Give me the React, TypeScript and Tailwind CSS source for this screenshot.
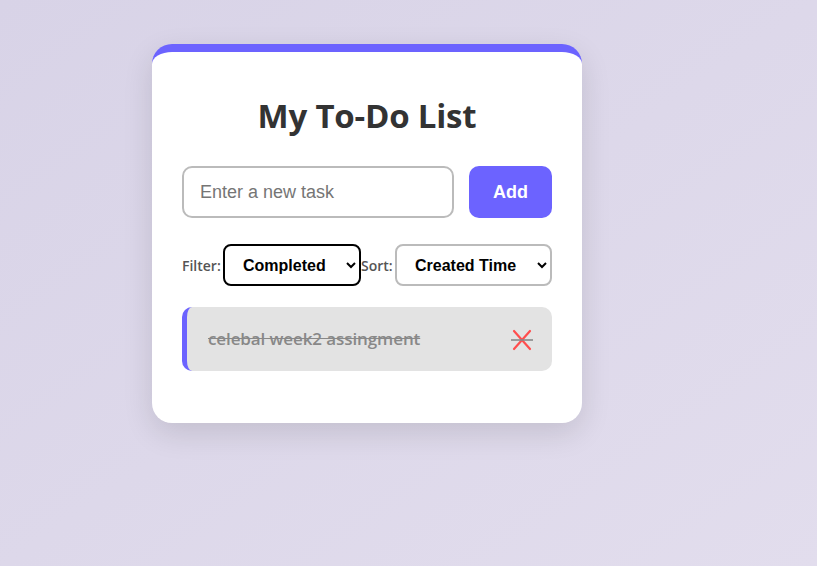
export default function App() {
  return (
    <div className="min-h-[566px] w-full bg-gradient-to-br from-[#d8d3e7] to-[#e2dded] pt-[44px] pl-[152px]">
      <div className="w-[430px] rounded-[20px] border-t-[8px] border-[#6c63ff] bg-white px-[30px] pb-[52px] shadow-[0_10px_30px_rgba(0,0,0,0.12)]">
        <h2 className="mt-[44px] mb-[30px] text-center text-[33px] font-bold leading-[40px] text-[#333] [font-family:'Open_Sans',sans-serif] tracking-[-0.2px]">
          My To-Do List
        </h2>

        <div className="flex gap-[15px]">
          <input
            type="text"
            placeholder="Enter a new task"
            className="h-[52px] w-[272px] rounded-[10px] border-2 border-[#bbb] px-[16px] text-[18px] text-[#333] outline-none placeholder:text-[#757575] [font-family:'Liberation_Sans',Arial,sans-serif]"
          />
          <button className="h-[52px] flex-1 rounded-[10px] bg-[#6c63ff] text-[18px] font-bold text-white [font-family:'Liberation_Sans',Arial,sans-serif]">
            Add
          </button>
        </div>

        <div className="mt-[26px] flex items-center">
          <label className="w-[41px] text-[14px] font-semibold text-[#555] [font-family:'Open_Sans',sans-serif]">Filter:</label>
          <select
            defaultValue="completed"
            className="h-[42px] w-[138px] rounded-[8px] border-2 border-black bg-white pl-[14px] pr-[4px] text-[16px] font-bold text-black outline-none [font-family:'Liberation_Sans',Arial,sans-serif]"
          >
            <option value="all">All</option>
            <option value="completed">Completed</option>
            <option value="pending">Pending</option>
          </select>
          <label className="w-[34px] text-[14px] font-semibold text-[#555] [font-family:'Open_Sans',sans-serif]">Sort:</label>
          <select
            defaultValue="created"
            className="h-[42px] w-[157px] rounded-[8px] border-2 border-[#bbb] bg-white pl-[14px] pr-[4px] text-[16px] font-bold text-black outline-none [font-family:'Liberation_Sans',Arial,sans-serif]"
          >
            <option value="created">Created Time</option>
            <option value="name">Name</option>
          </select>
        </div>

        <ul className="mt-[21px]">
          <li className="flex h-[64px] items-center justify-between rounded-[10px] border-l-[5px] border-[#6c63ff] bg-[#e3e3e3] pl-[21px] pr-[19px] text-[17px] font-semibold tracking-[-0.1px] text-[#888] line-through [font-family:'Open_Sans',sans-serif]">
            <span>celebal week2 assingment</span>
            <svg width="22" height="22" viewBox="0 0 22 22" className="mt-[2px]">
              <path d="M3 2 L19 20 M19 2 L3 20" stroke="#ff4d4d" strokeWidth="2.2" strokeLinecap="round" />
              <path d="M0 11 H22" stroke="#888" strokeWidth="1.6" />
            </svg>
          </li>
        </ul>
      </div>
    </div>
  )
}
